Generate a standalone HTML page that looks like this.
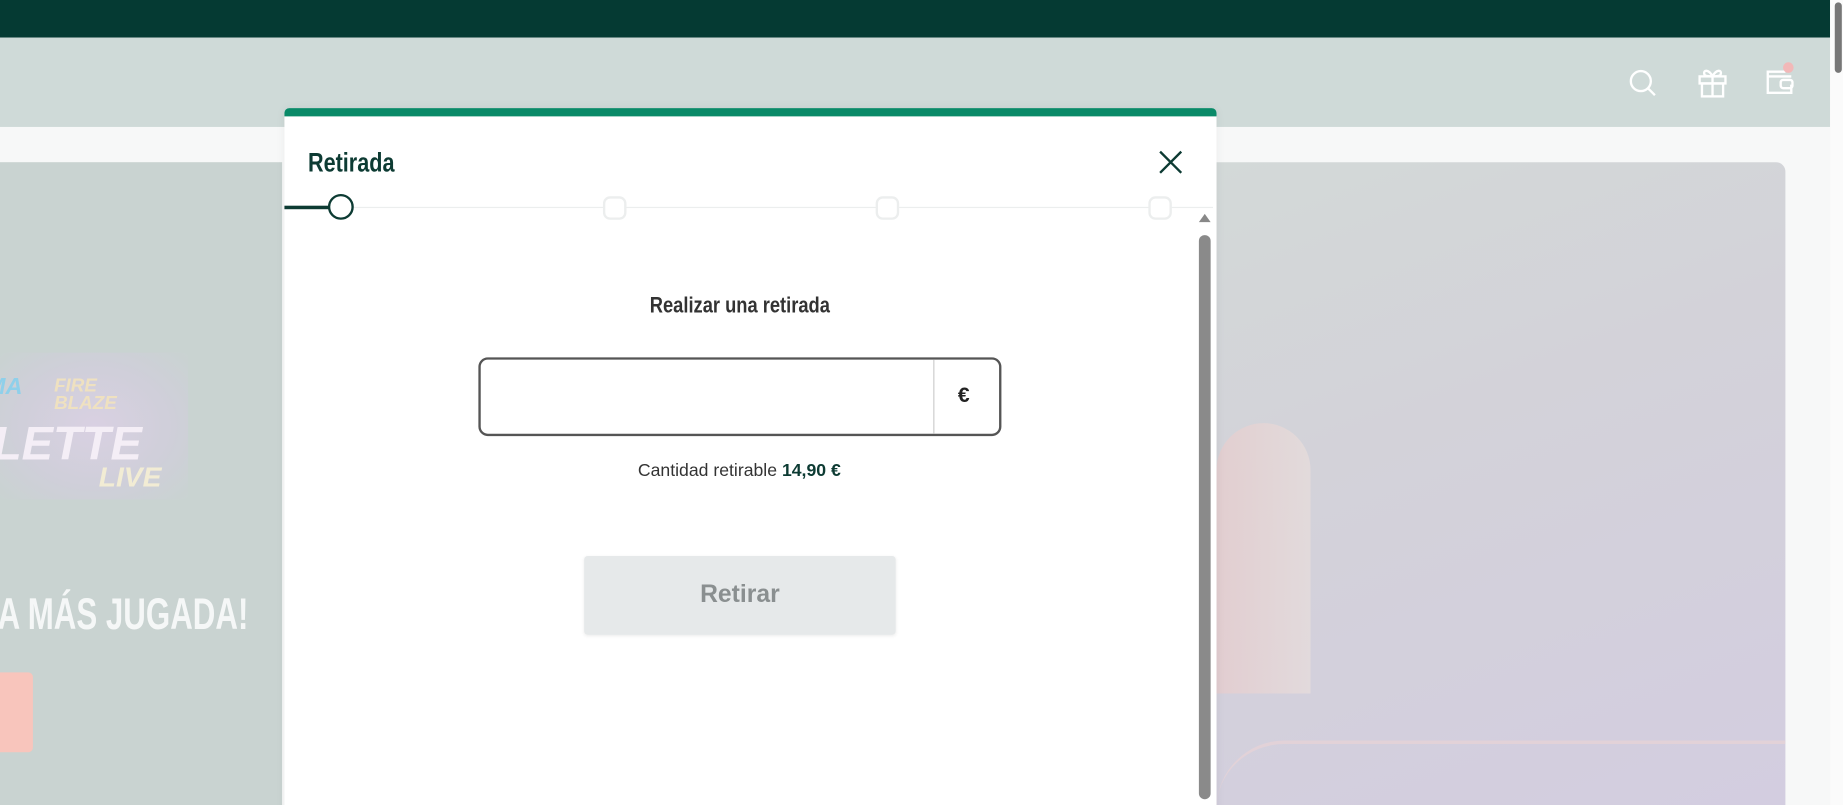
<!DOCTYPE html>
<html><head><meta charset="utf-8"><style>
html,body{margin:0;padding:0;width:1843px;height:805px;overflow:hidden;background:#f7f8f8;}
#w{position:absolute;left:0;top:0;width:1568px;height:685px;transform:scale(1.17538);transform-origin:0 0;font-family:"Liberation Sans",sans-serif;background:#f7f8f8;overflow:hidden}
.a{position:absolute}
.cond{font-family:"Liberation Sans Narrow","Liberation Sans",sans-serif;font-weight:bold}
</style></head><body><div id="w">
<div class="a" style="left:0;top:0;width:1557px;height:32px;background:#053a33"></div>
<div class="a" style="left:0;top:32px;width:1557px;height:76px;background:#cfdad8"></div>
<div class="a" style="left:1557px;top:0;width:11px;height:685px;background:#fbfbfb"></div>
<div class="a" style="left:1561px;top:2px;width:6px;height:60px;background:#777;border-radius:3px"></div>
<svg class="a" style="left:1384px;top:57px" width="28" height="28" viewBox="0 0 28 28" fill="none" stroke="#fff" stroke-width="2"><circle cx="12" cy="12" r="8.5"/><path d="M18 18l6 6"/></svg>
<svg class="a" style="left:1443px;top:55px" width="28" height="30" viewBox="0 0 28 30" fill="none" stroke="#fff" stroke-width="2"><rect x="3" y="10" width="22" height="6"/><rect x="5" y="16" width="18" height="11"/><path d="M14 10v17M14 10c-3-6-8-6-7-2 0 2 4 2 7 2M14 10c3-6 8-6 7-2 0 2-4 2-7 2"/></svg>
<svg class="a" style="left:1500px;top:54px" width="30" height="30" viewBox="0 0 30 30" fill="none" stroke="#fff" stroke-width="2"><path d="M19 7H4v18h20v-7M4 11h20"/><rect x="15" y="14" width="10" height="7" rx="2"/></svg>
<div class="a" style="left:1517px;top:53px;width:9px;height:9px;border-radius:50%;background:#f2b8b8"></div>
<div class="a" style="left:0;top:138px;width:240px;height:547px;background:#c9d3d1"></div>
<div class="a" style="left:0;top:300px;width:160px;height:125px;background:radial-gradient(ellipse at 50% 50%,#d9d0e2 0%,#cfcfd9 60%,#c9d3d1 100%)"></div>
<div class="a" style="left:-12px;top:318px;font:italic bold 20px 'Liberation Sans';color:#8fd0ea">MA</div>
<div class="a" style="left:46px;top:321px;font:italic bold 16px/15px 'Liberation Sans';color:#efe1c0">FIRE<br>BLAZE</div>
<div class="a" style="left:-6px;top:356px;font:italic bold 40px 'Liberation Sans';color:#f4eef6">LETTE</div>
<div class="a" style="left:84px;top:393px;font:italic bold 24px 'Liberation Sans';color:#f2ecd4">LIVE</div>
<div class="a" style="left:-2px;top:502px;font:bold 38px 'Liberation Sans';color:#f5f7f7;transform:scaleX(.7);transform-origin:0 0;white-space:nowrap">A MÁS JUGADA!</div>
<div class="a" style="left:0;top:572px;width:28px;height:68px;background:#f8c5bc;border-radius:0 4px 4px 0"></div>
<div class="a" style="left:1035px;top:138px;width:484px;height:547px;border-radius:0 8px 0 0;background:linear-gradient(160deg,#d3d9d8 0%,#d3d2d9 40%,#d3cde0 100%)"></div>
<div class="a" style="left:1035px;top:360px;width:80px;height:230px;border-radius:40px 40px 0 0;background:linear-gradient(90deg,#e8cccc,#e9dedc);opacity:.7"></div>
<div class="a" style="left:1035px;top:630px;width:484px;height:55px;border-top:3px solid #e2d2d8;border-radius:120px 0 0 0"></div>
<div class="a" style="left:242px;top:92px;width:793px;height:600px;background:#fff;border-radius:4px 4px 0 0;box-shadow:0 0 8px rgba(0,0,0,.05)"></div>
<div class="a" style="left:242px;top:92px;width:793px;height:7px;background:#0a8a68;border-radius:4px 4px 0 0"></div>
<div class="a cond" style="left:262px;top:125px;font-size:23px;color:#0d3b33;transform:scaleX(.8);transform-origin:0 0">Retirada</div>
<svg class="a" style="left:985px;top:127px" width="22" height="22" viewBox="0 0 22 22" stroke="#0d3b33" stroke-width="2"><path d="M2 2l18 18M20 2L2 20"/></svg>
<div class="a" style="left:242px;top:176px;width:790px;height:1px;background:#eceeee"></div>
<div class="a" style="left:242px;top:175px;width:40px;height:3px;background:#0d3b33"></div>
<div class="a" style="left:279px;top:165px;width:18px;height:18px;border:2.5px solid #0d3b33;border-radius:50%;background:#fff"></div>
<div class="a" style="left:513px;top:167px;width:16px;height:16px;border:2px solid #eceeee;border-radius:6px;background:#fff"></div>
<div class="a" style="left:745px;top:167px;width:16px;height:16px;border:2px solid #eceeee;border-radius:6px;background:#fff"></div>
<div class="a" style="left:977px;top:167px;width:16px;height:16px;border:2px solid #eceeee;border-radius:6px;background:#fff"></div>
<div class="a" style="left:1020px;top:182px;width:0;height:0;border-left:5px solid transparent;border-right:5px solid transparent;border-bottom:7px solid #888"></div>
<div class="a" style="left:1020px;top:200px;width:10px;height:480px;background:#8a8a8a;border-radius:5px"></div>
<div class="a cond" style="left:242px;width:774px;top:250px;text-align:center;font-size:19px;color:#333"><span style="display:inline-block;transform:scaleX(.82)">Realizar una retirada</span></div>
<div class="a" style="left:407px;top:304px;width:441px;height:63px;border:2px solid #555;border-radius:8px"></div>
<div class="a" style="left:794px;top:306px;width:1px;height:63px;background:#ccc"></div>
<div class="a" style="left:815px;top:326px;font:bold 18px 'Liberation Sans';color:#222">€</div>
<div class="a" style="left:242px;width:774px;top:392px;text-align:center;font-size:15px;color:#333">Cantidad retirable <b style="color:#0d3b33">14,90 €</b></div>
<div class="a" style="left:497px;top:473px;width:265px;height:67px;background:#e6e9ea;border-radius:3px;box-shadow:0 1px 3px rgba(0,0,0,.08)"></div>
<div class="a" style="left:497px;top:494px;width:265px;text-align:center;font:bold 21px 'Liberation Sans';color:#8a8f90">Retirar</div>
</div></body></html>
